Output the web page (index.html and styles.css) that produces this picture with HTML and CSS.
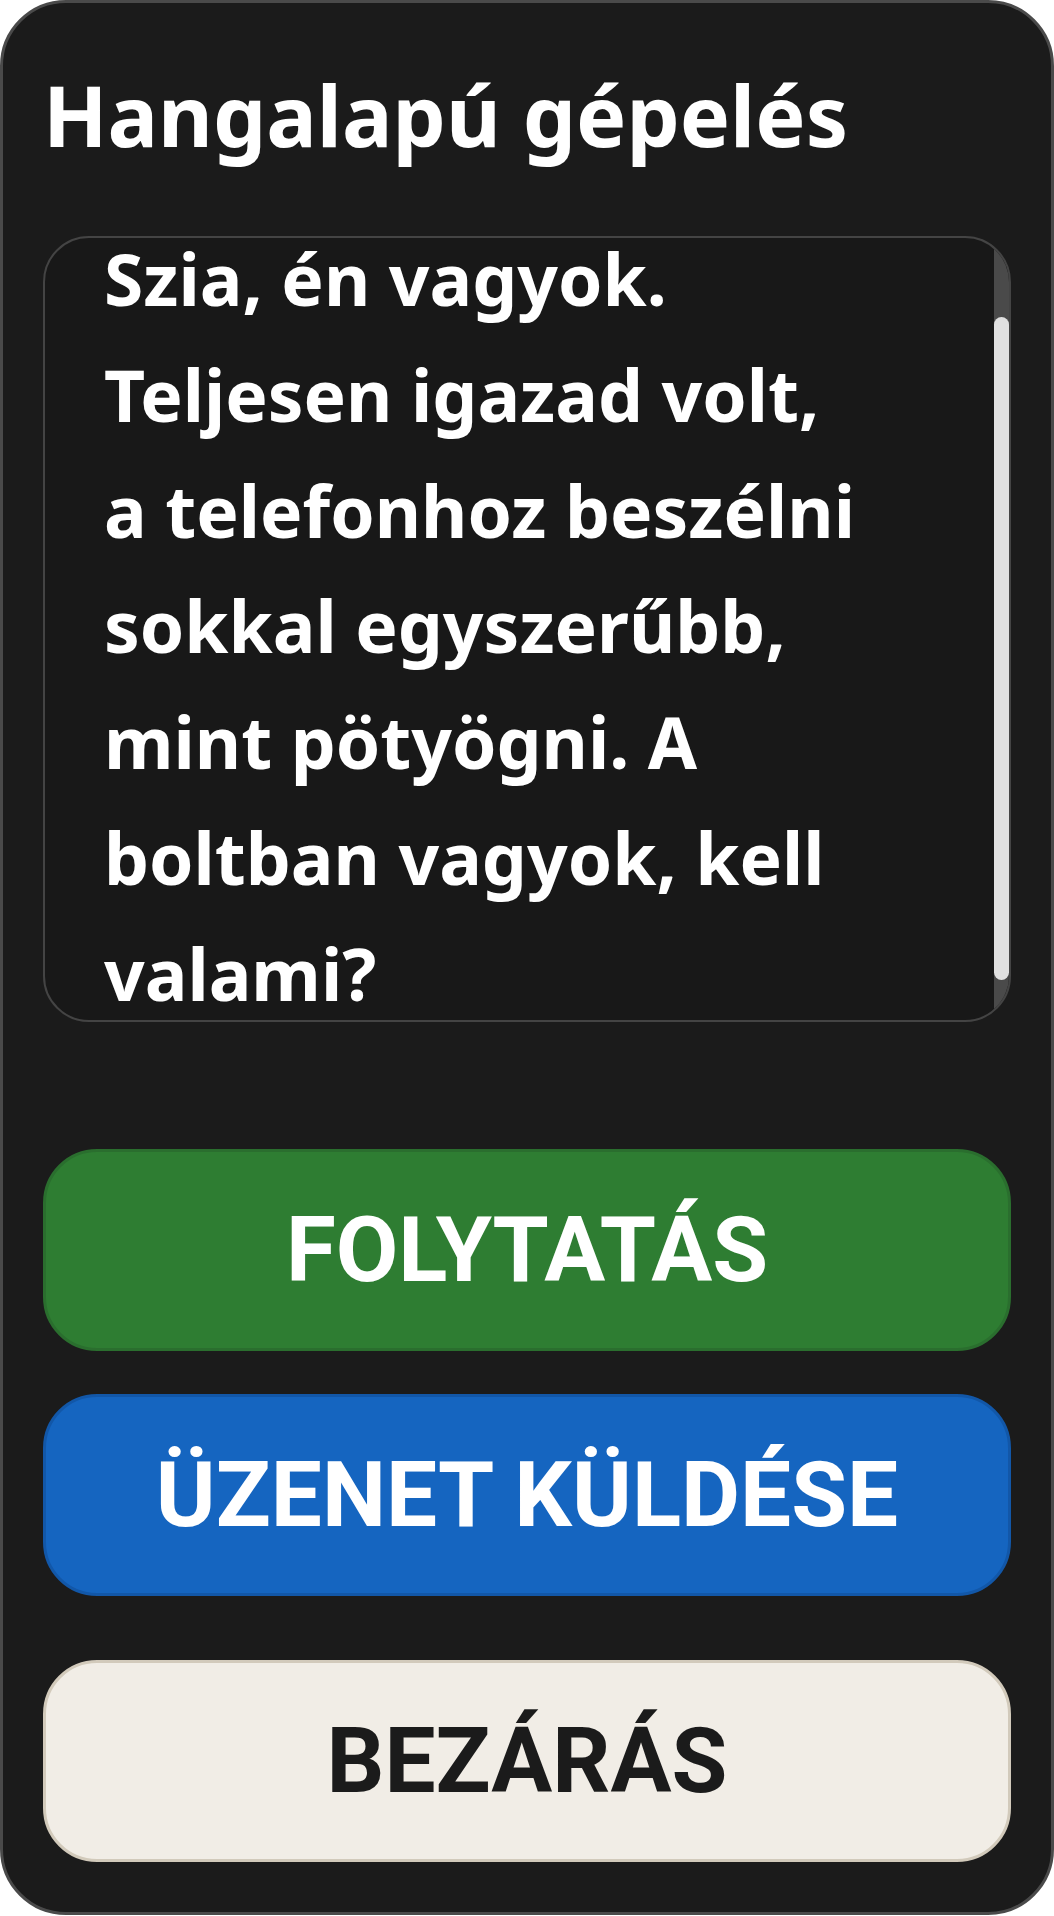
FILE: index.html
```html
<!DOCTYPE html>
<html lang="hu">
<head>
<meta charset="utf-8">
<title>Hangalapú gépelés</title>
<link rel="stylesheet" href="styles.css">
</head>
<body>
<main class="card">
  <h1 class="title">Hangalapú gépelés</h1>
  <div class="transcript">
    <div class="transcript-scroll" id="transcript">
      <p class="transcript-text">Szia, én vagyok. Teljesen igazad volt, a telefonhoz beszélni sokkal egyszerűbb, mint pötyögni. A boltban vagyok, kell valami?</p>
    </div>
    <div class="scrollbar" aria-hidden="true"><div class="scrollbar-thumb"></div></div>
  </div>
  <div class="actions">
    <button class="btn btn-continue" type="button">FOLYTATÁS</button>
    <button class="btn btn-send" type="button">ÜZENET KÜLDÉSE</button>
    <button class="btn btn-close" type="button">BEZÁRÁS</button>
  </div>
</main>
<script src="script.js"></script>
</body>
</html>
```

FILE: styles.css
```css
html, body {
  margin: 0;
  padding: 0;
  background: #ffffff;
}

.card {
  box-sizing: border-box;
  width: 1054px;
  height: 1915px;
  background: #1b1b1b;
  border: 3px solid #4a4a4a;
  border-radius: 66px;
  padding: 62px 40px 0 40px;
  display: flex;
  flex-direction: column;
}

.title {
  margin: 0 0 71px 0;
  font-family: "Noto Sans", "Open Sans", sans-serif;
  font-weight: 700;
  font-size: 84.4px;
  line-height: 100px;
  color: #ffffff;
  white-space: nowrap;
}

.transcript {
  box-sizing: border-box;
  height: 786px;
  background: #181818;
  border: 2px solid #444444;
  border-radius: 46px;
  overflow: hidden;
  display: flex;
}

.transcript-scroll {
  flex: 1;
  overflow: hidden;
  padding: 76px 130px 34px 59px;
}

.transcript-text {
  margin: 0;
  font-family: "Noto Sans", "Open Sans", sans-serif;
  font-weight: 700;
  font-size: 71.3px;
  line-height: 115.8px;
  color: #ffffff;
}

.scrollbar {
  flex: 0 0 15px;
  background: #4a4a4a;
  display: flex;
  flex-direction: column;
}

.scrollbar-thumb {
  margin-top: 79px;
  height: 663px;
  background: #e0e0e0;
  border-radius: 8px;
}

.actions {
  display: flex;
  flex-direction: column;
  margin-top: 127px;
}

.btn {
  box-sizing: border-box;
  height: 202px;
  width: 100%;
  border-radius: 54px;
  border: 3px solid;
  font-family: Roboto, "Liberation Sans", sans-serif;
  font-weight: 700;
  font-size: 90.8px;
  color: #ffffff;
  padding: 0;
  display: flex;
  align-items: center;
  justify-content: center;
}

.btn-continue {
  background: #2e7d32;
  border-color: #2a6e2e;
}

.btn-send {
  margin-top: 43px;
  background: #1565c0;
  border-color: #1257a8;
}

.btn-close {
  margin-top: 64px;
  background: #f1ede6;
  border-color: #d2cabb;
  color: #1b1b1b;
}
```

FILE: script.js
```js
document.getElementById('transcript').scrollTop = 93;
```
